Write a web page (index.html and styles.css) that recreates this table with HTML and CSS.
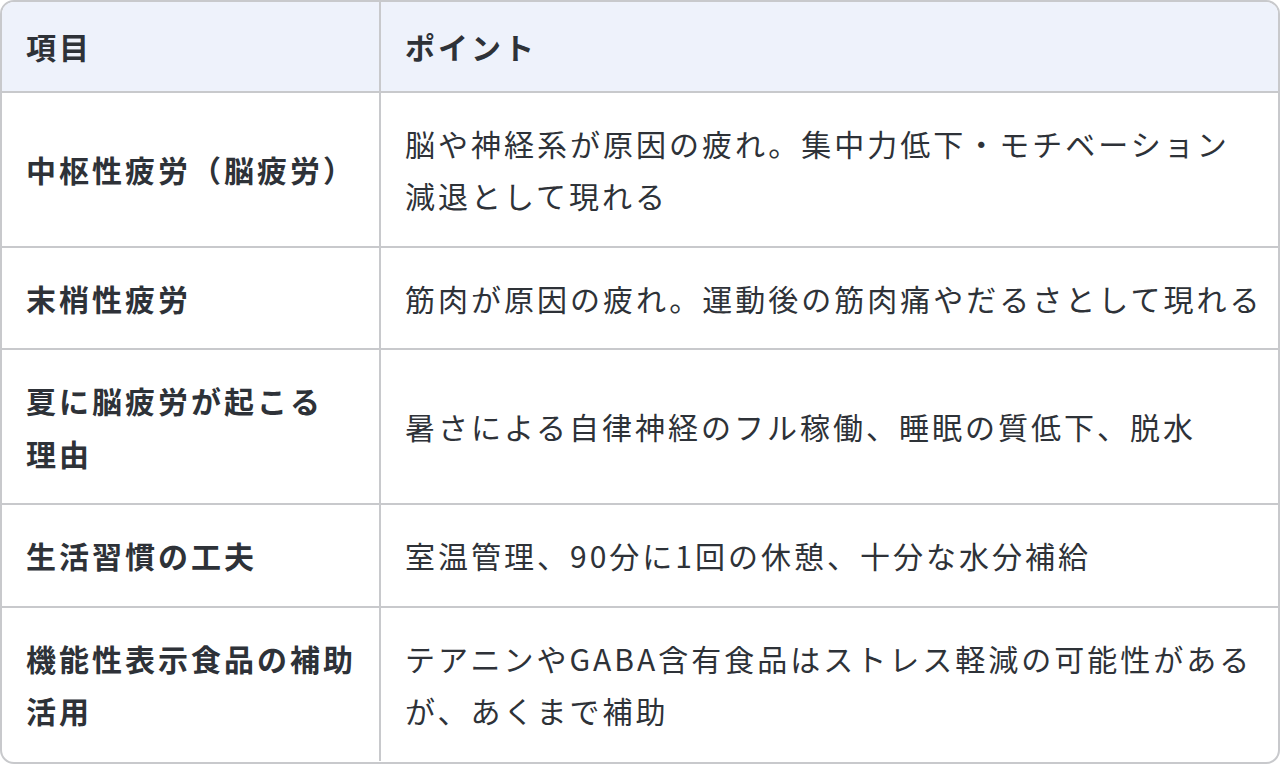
FILE: index.html
```html
<!DOCTYPE html>
<html lang="ja">
<head>
<meta charset="utf-8">
<link rel="stylesheet" href="styles.css">
</head>
<body>
<div class="wrap">
<table class="tbl">
  <colgroup><col class="c1"><col class="c2"></colgroup>
  <thead>
    <tr><th>項目</th><th>ポイント</th></tr>
  </thead>
  <tbody>
    <tr><td class="k">中枢性疲労（脳疲労）</td><td>脳や神経系が原因の疲れ。集中力低下・モチベーション<br>減退として現れる</td></tr>
    <tr><td class="k">末梢性疲労</td><td>筋肉が原因の疲れ。運動後の筋肉痛やだるさとして現れる</td></tr>
    <tr><td class="k">夏に脳疲労が起こる<br>理由</td><td>暑さによる自律神経のフル稼働、睡眠の質低下、脱水</td></tr>
    <tr><td class="k">生活習慣の工夫</td><td>室温管理、90分に1回の休憩、十分な水分補給</td></tr>
    <tr><td class="k">機能性表示食品の補助<br>活用</td><td>テアニンやGABA含有食品はストレス軽減の可能性がある<br>が、あくまで補助</td></tr>
  </tbody>
</table>
</div>
</body>
</html>
```
FILE: styles.css
```css
html, body {
  margin: 0;
  padding: 0;
  background: #ffffff;
}
body {
  font-family: "Noto Sans CJK JP", "Noto Sans", sans-serif;
  color: #2e3238;
}
.wrap {
  width: 1280px;
  height: 764px;
  box-sizing: border-box;
  border: 2px solid #c8c9cc;
  border-radius: 14px;
  overflow: hidden;
}
.tbl {
  width: 100%;
  border-collapse: separate;
  border-spacing: 0;
  table-layout: fixed;
  font-size: 30px;
  letter-spacing: 3px;
  line-height: 52.5px;
}
.c1 { width: 379px; }
.tbl th, .tbl td {
  text-align: left;
  vertical-align: middle;
  padding: 24px 8px 24px 24px;
  border-bottom: 2px solid #c8c9cc;
  white-space: nowrap;
}
.tbl th:first-child, .tbl td:first-child {
  border-right: 2px solid #c8c9cc;
}
.tbl tbody tr:last-child td {
  border-bottom: none;
}
.tbl th {
  background: #eef2fb;
  font-weight: 700;
  padding-top: 18px;
  padding-bottom: 18px;
}
.tbl td.k {
  font-weight: 700;
}
.tbl td {
  font-weight: 400;
}
```
